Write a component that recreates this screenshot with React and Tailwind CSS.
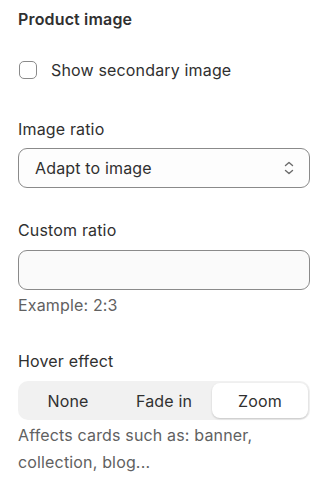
import React from "react";

export default function App() {
  return (
    <div
      className="w-[329px] h-[487px] bg-white text-[#303030] overflow-hidden"
      style={{ fontFamily: "Inter, 'Noto Sans', sans-serif" }}
    >
      <div className="px-[18px] pt-[9px] text-[16px] tracking-[0.01em]">
        <div className="h-[20px] leading-[20px] font-semibold">Product image</div>

        <div className="mt-[31px] flex items-center h-[20px]">
          <div className="ml-[1px] w-[18px] h-[18px] rounded-[5px] border border-[#8a8a8a] bg-white" />
          <span className="ml-[14px] leading-[20px]">Show secondary image</span>
        </div>

        <div className="mt-[39px] h-[20px] leading-[20px]">Image ratio</div>
        <div className="mt-[9px] h-[40px] w-[292px] rounded-[9px] border border-[#8a8a8a] bg-[#fdfdfd] flex items-center justify-between pl-[16px] pr-[14px]">
          <span className="leading-[20px]">Adapt to image</span>
          <svg width="12" height="18" viewBox="0 0 12 18" fill="none" stroke="#6b6b6b" strokeWidth="1.4" strokeLinecap="round" strokeLinejoin="round">
            <path d="M2.5 6.5 L6 3.5 L9.5 6.5" />
            <path d="M2.5 11.5 L6 14.5 L9.5 11.5" />
          </svg>
        </div>

        <div className="mt-[32px] h-[20px] leading-[20px]">Custom ratio</div>
        <div className="mt-[10px] h-[40px] w-[292px] rounded-[9px] border border-[#8a8a8a] bg-[#fafafa]" />
        <div className="mt-[5px] h-[20px] leading-[20px] text-[#616161]">Example: 2:3</div>

        <div className="mt-[36px] h-[20px] leading-[20px]">Hover effect</div>
        <div className="mt-[10px] h-[39px] w-[292px] rounded-[10px] bg-[#f1f1f1] p-[2px] grid grid-cols-3">
          <div className="flex items-center justify-center">None</div>
          <div className="flex items-center justify-center">Fade in</div>
          <div className="flex items-center justify-center rounded-[8px] bg-white shadow-[0_1px_2px_rgba(0,0,0,0.18)]">Zoom</div>
        </div>
        <div className="mt-[2px] leading-[27px] text-[#616161]">
          Affects cards such as: banner,
          <br />
          collection, blog...
        </div>
      </div>
    </div>
  );
}
